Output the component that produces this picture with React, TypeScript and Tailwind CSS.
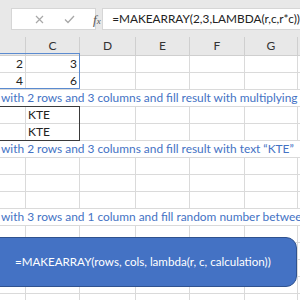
import React from "react";

const colW = [26, 54, 56, 54, 55, 53, 10];
const colLetters = ["", "C", "D", "E", "F", "G", ""];

function GridRow({ cells }: { cells?: (React.ReactNode | null)[] }) {
  return (
    <div className="flex h-[17px] border-b border-[#dadada]">
      {colW.map((w, i) => (
        <div
          key={i}
          style={{ width: w }}
          className="shrink-0 h-full border-r border-[#dadada] flex items-center justify-end pr-[2px] text-[12px] text-[#222]"
        >
          {cells ? cells[i] : null}
        </div>
      ))}
    </div>
  );
}

function TextRow({ text }: { text: string }) {
  return (
    <div className="h-[17px] border-b border-[#dadada] flex items-center pl-[1px] whitespace-nowrap overflow-hidden text-[11.9px] text-[#4472c4]">
      {text}
    </div>
  );
}

export default function App() {
  return (
    <div className="w-[300px] h-[300px] overflow-hidden bg-white relative font-['Lato','Open_Sans',sans-serif]">
      {/* formula bar */}
      <div className="h-[37px] bg-[#e8e8e8] flex items-start pt-[8px]">
        <div className="ml-[11px] w-[90px] h-[22px] bg-white border border-[#d6d6d6] flex items-center relative">
          <svg className="absolute left-[23px] top-[6px]" width="9" height="9" viewBox="0 0 9 9">
            <path d="M1 1L8 8M8 1L1 8" stroke="#a8a8a8" strokeWidth="1.2" fill="none" />
          </svg>
          <svg className="absolute left-[52px] top-[6px]" width="11" height="9" viewBox="0 0 11 9">
            <path d="M1 4.5L4 7.5L10 1" stroke="#a8a8a8" strokeWidth="1.3" fill="none" />
          </svg>
          <span className="absolute left-[81px] top-[1px] font-['Liberation_Serif',serif] italic text-[13px] text-[#555]">
            f<span className="text-[9px]">x</span>
          </span>
        </div>
        <div className="ml-[6px] flex-1 h-[22px] bg-white border border-[#d6d6d6] border-r-0 flex items-center pl-[9px] text-[11.8px] text-[#222] whitespace-nowrap">
          =MAKEARRAY(2,3,LAMBDA(r,c,r*c))
        </div>
      </div>
      {/* column headers */}
      <div className="flex h-[19px] bg-[#e8e8e8] border-b border-[#cfcfcf]">
        {colW.map((w, i) => (
          <div
            key={i}
            style={{ width: w }}
            className="shrink-0 h-full border-r border-[#cfcfcf] flex items-center justify-center overflow-hidden text-[12px] text-[#333]"
          >
            {colLetters[i]}
          </div>
        ))}
      </div>
      {/* grid */}
      <div className="relative">
        <GridRow cells={["2", "3"]} />
        <GridRow cells={["4", "6"]} />
        <TextRow text="with 2 rows and 3 columns and fill result with multiplying" />
        <GridRow cells={[null, <span className="w-full pl-[2px] text-left">KTE</span>]} />
        <GridRow cells={[null, <span className="w-full pl-[2px] text-left">KTE</span>]} />
        <TextRow text="with 2 rows and 3 columns and fill result with text “KTE”" />
        <GridRow />
        <GridRow />
        <GridRow />
        <TextRow text="with 3 rows and 1 column and fill random number between" />
        <GridRow />
        <GridRow />
        <GridRow />
        <GridRow />
        <GridRow />

        {/* spill border blue */}
        <div className="absolute left-[-2px] top-[-3px] w-[82px] h-[36px] border border-[#5b8bd0]" />
        {/* KTE selection border */}
        <div className="absolute left-[-2px] top-[50px] w-[82px] h-[35px] border-[1.5px] border-[#3a3a3a]" />
        {/* blue shape */}
        <div className="absolute left-[-12px] top-[181px] w-[309px] h-[50px] bg-[#4472c4] border border-[#2f528f] rounded-[11px] flex items-center pl-[26px] text-white text-[11.6px] whitespace-nowrap">
          =MAKEARRAY(rows, cols, lambda(r, c, calculation))
        </div>
      </div>
    </div>
  );
}
